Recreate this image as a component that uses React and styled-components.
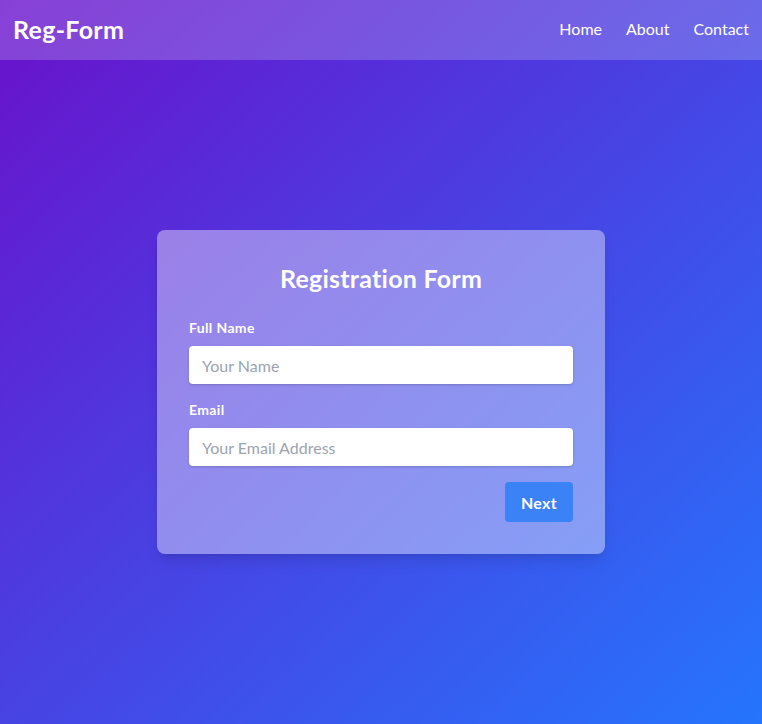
import React from 'react';
import styled, { createGlobalStyle } from 'styled-components';

const GlobalStyle = createGlobalStyle`
  * {
    box-sizing: border-box;
  }
  html, body {
    margin: 0;
    padding: 0;
  }
  body {
    font-family: Lato, "Noto Sans", sans-serif;
  }
`;

const Page = styled.div`
  display: flex;
  flex-direction: column;
  min-height: 100vh;
  background: linear-gradient(to bottom right, #6a11cb, #2575fc);
  color: #fff;
`;

const Header = styled.header`
  display: flex;
  align-items: center;
  justify-content: space-between;
  height: 60px;
  padding: 0 13px 3px;
  background: rgba(255, 255, 255, 0.2);
`;

const Brand = styled.h1`
  margin: 0;
  font-size: 25px;
  font-weight: 700;
  line-height: 32px;
  letter-spacing: 0.3px;
`;

const Nav = styled.nav`
  display: flex;
  gap: 24px;
`;

const NavLink = styled.a`
  color: #fff;
  text-decoration: none;
  font-size: 16px;
  line-height: 24px;
  cursor: pointer;
`;

const Main = styled.main`
  flex: 1;
  display: flex;
  align-items: center;
  justify-content: center;
`;

const Card = styled.form`
  width: 448px;
  padding: 32px;
  border-radius: 8px;
  background: rgba(255, 255, 255, 0.4);
  box-shadow: 0 10px 15px -3px rgba(0, 0, 0, 0.1), 0 4px 6px -4px rgba(0, 0, 0, 0.1);
`;

const Title = styled.h2`
  margin: 0 0 24px;
  text-align: center;
  font-size: 25px;
  font-weight: 700;
  line-height: 32px;
  letter-spacing: 0.25px;
`;

const Field = styled.div`
  margin-bottom: 16px;
`;

const Label = styled.label`
  display: block;
  margin-bottom: 8px;
  font-size: 14px;
  font-weight: 700;
  line-height: 20px;
  letter-spacing: 0.35px;
`;

const Input = styled.input`
  display: block;
  width: 100%;
  height: 38px;
  padding: 0 13px;
  border: none;
  border-radius: 4px;
  background: #fff;
  color: #374151;
  font-family: inherit;
  font-size: 16px;
  box-shadow: 0 1px 3px 0 rgba(0, 0, 0, 0.15), 0 1px 2px -1px rgba(0, 0, 0, 0.1);
  outline: none;

  &::placeholder {
    color: #9ca3af;
  }
`;

const Actions = styled.div`
  display: flex;
  justify-content: flex-end;
`;

const Button = styled.button`
  height: 40px;
  padding: 0 16px;
  border: none;
  border-radius: 4px;
  background: #3b82f6;
  color: #fff;
  font-family: inherit;
  font-size: 16px;
  font-weight: 700;
  letter-spacing: 0.3px;
  cursor: pointer;
`;

const App = () => {
  return (
    <>
      <GlobalStyle />
      <Page>
        <Header>
          <Brand>Reg-Form</Brand>
          <Nav>
            <NavLink>Home</NavLink>
            <NavLink>About</NavLink>
            <NavLink>Contact</NavLink>
          </Nav>
        </Header>
        <Main>
          <Card onSubmit={(e) => e.preventDefault()}>
            <Title>Registration Form</Title>
            <Field>
              <Label htmlFor="name">Full Name</Label>
              <Input id="name" type="text" placeholder="Your Name" />
            </Field>
            <Field>
              <Label htmlFor="email">Email</Label>
              <Input id="email" type="email" placeholder="Your Email Address" />
            </Field>
            <Actions>
              <Button type="submit">Next</Button>
            </Actions>
          </Card>
        </Main>
      </Page>
    </>
  );
};

export default App;
